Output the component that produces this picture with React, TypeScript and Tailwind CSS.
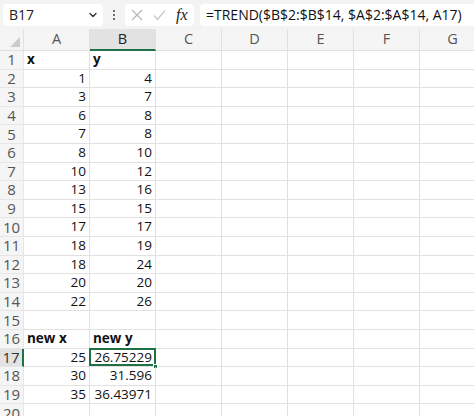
import React from 'react';

const COLS = ['A', 'B', 'C', 'D', 'E', 'F', 'G'];

// row data: [A, B, bold?]
const ROWS: { a: string; b: string; bold?: boolean }[] = [
  { a: 'x', b: 'y', bold: true },
  { a: '1', b: '4' },
  { a: '3', b: '7' },
  { a: '6', b: '8' },
  { a: '7', b: '8' },
  { a: '8', b: '10' },
  { a: '10', b: '12' },
  { a: '13', b: '16' },
  { a: '15', b: '15' },
  { a: '17', b: '17' },
  { a: '18', b: '19' },
  { a: '18', b: '24' },
  { a: '20', b: '20' },
  { a: '22', b: '26' },
  { a: '', b: '' },
  { a: 'new x', b: 'new y', bold: true },
  { a: '25', b: '26.75229' },
  { a: '30', b: '31.596' },
  { a: '35', b: '36.43971' },
  { a: '', b: '' },
];

const ACTIVE_ROW = 17;

function Chevron() {
  return (
    <svg width="10" height="10" viewBox="0 0 10 10" className="text-[#333]">
      <path d="M2 3.5 L5 6.5 L8 3.5" fill="none" stroke="currentColor" strokeWidth="1.4" strokeLinecap="round" strokeLinejoin="round" />
    </svg>
  );
}

function Toolbar() {
  return (
    <div className="flex h-[29px] items-center bg-[#f3f3f3] pl-[3px]">
      <div className="flex h-[22px] w-[100px] items-center justify-between rounded-[4px] bg-white pl-[6px] pr-[5px] text-[14px] text-[#222]">
        <span>B17</span>
        <Chevron />
      </div>
      <div className="flex w-[22px] flex-col items-center justify-center gap-[2px]">
        <span className="h-[2px] w-[2px] rounded-full bg-[#444]" />
        <span className="h-[2px] w-[2px] rounded-full bg-[#444]" />
        <span className="h-[2px] w-[2px] rounded-full bg-[#444]" />
      </div>
      <div className="flex h-[22px] w-[69px] items-center gap-[10px] rounded-[4px] bg-white pl-[6px]">
        <svg width="12" height="12" viewBox="0 0 12 12">
          <path d="M1 1 L11 11 M11 1 L1 11" stroke="#b4b4b4" strokeWidth="1.1" />
        </svg>
        <svg width="13" height="12" viewBox="0 0 13 12">
          <path d="M1 6.5 L4.5 10.5 L12 1.5" fill="none" stroke="#b4b4b4" strokeWidth="1.1" />
        </svg>
        <span className="font-['Liberation_Serif',serif] text-[16px] italic leading-none text-[#222]">fx</span>
      </div>
      <div className="ml-[6px] flex h-[22px] flex-1 items-center rounded-l-[4px] bg-white pl-[6px] text-[14px] text-[#111]">
        =TREND($B$2:$B$14, $A$2:$A$14, A17)
      </div>
    </div>
  );
}

function HeaderRow() {
  return (
    <div className="flex h-[22px] bg-[#f5f5f5]">
      <div className="relative w-[24px] shrink-0 border-r border-b border-[#e0e0e0]">
        <svg width="10" height="10" viewBox="0 0 10 10" className="absolute bottom-[3px] right-[3px]">
          <path d="M10 0 L10 10 L0 10 Z" fill="#cbcbcb" />
        </svg>
      </div>
      {COLS.map((c) => (
        <div
          key={c}
          className={
            c === 'B'
              ? 'flex w-[66px] shrink-0 items-center justify-center border-r border-b-2 border-r-[#e0e0e0] border-b-[#1e7145] bg-[#e2e2e2] pt-[1px] text-[14.5px] text-[#222]'
              : 'flex w-[66px] shrink-0 items-center justify-center border-r border-b border-[#e0e0e0] text-[14.5px] text-[#555]'
          }
        >
          {c}
        </div>
      ))}
    </div>
  );
}

function Row({ n, a, b, bold }: { n: number; a: string; b: string; bold?: boolean }) {
  const active = n === ACTIVE_ROW;
  const align = bold ? 'justify-start pl-[3px]' : 'justify-end pr-[3px]';
  const weight = bold ? 'font-bold' : '';
  return (
    <div className="flex h-[18.6px]">
      <div
        className={
          active
            ? 'flex w-[24px] shrink-0 items-center justify-center border-r-2 border-b border-r-[#1e7145] border-b-[#e6e6e6] bg-[#e2e2e2] text-[15px] text-[#333]'
            : 'flex w-[24px] shrink-0 items-center justify-center border-r border-b border-[#e6e6e6] bg-[#f5f5f5] text-[15px] text-[#555]'
        }
      >
        {n}
      </div>
      <div className={`flex w-[66px] shrink-0 items-center border-r border-b border-[#e1e1e1] ${align} ${weight}`}>{a}</div>
      <div className={`relative flex w-[66px] shrink-0 items-center border-r border-b border-[#e1e1e1] ${align} ${weight}`}>
        {active && (
          <>
            <div className="absolute left-[-1px] top-[-1px] h-[calc(100%+1px)] w-[67px] border-2 border-[#1e7145]" />
            <div className="absolute bottom-[-3px] right-[-3px] h-[5px] w-[5px] border border-white bg-[#1e7145]" />
          </>
        )}
        <span className="relative">{b}</span>
      </div>
      {COLS.slice(2).map((c) => (
        <div key={c} className="w-[66px] shrink-0 border-r border-b border-[#e1e1e1]" />
      ))}
    </div>
  );
}

export default function App() {
  return (
    <div className="h-[416px] w-[474px] overflow-hidden bg-white font-['Open_Sans',sans-serif] text-[13.5px] leading-none text-[#111]">
      <Toolbar />
      <HeaderRow />
      {ROWS.map((r, i) => (
        <Row key={i} n={i + 1} a={r.a} b={r.b} bold={r.bold} />
      ))}
    </div>
  );
}
